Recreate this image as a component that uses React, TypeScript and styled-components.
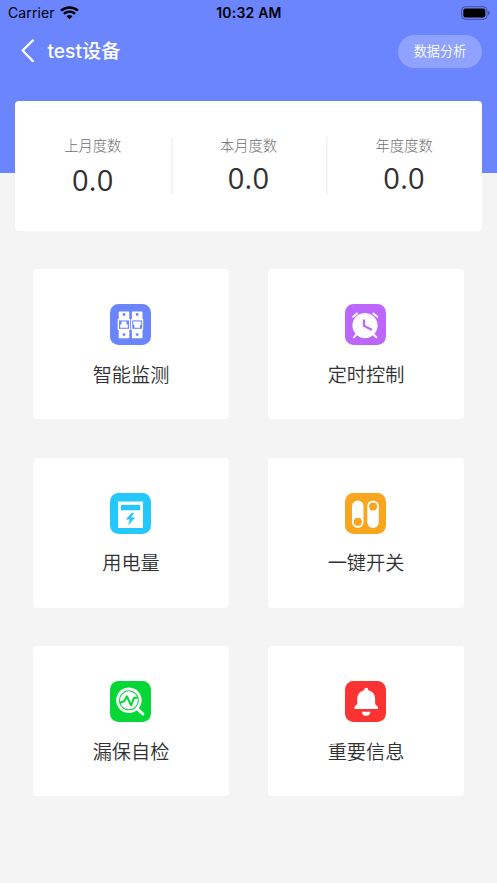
import React from "react";
import styled, { createGlobalStyle } from "styled-components";

const Global = createGlobalStyle`
  * { box-sizing: border-box; }
  body {
    margin: 0;
    background: #f4f4f4;
    font-family: Inter, "Noto Sans CJK SC", sans-serif;
    color: #303133;
  }
`;

const Page = styled.main`
  min-height: 883px;
  overflow: hidden;
  background: linear-gradient(#6b85ff 173px, #f4f4f4 173px);
`;

const StatusBar = styled.div`
  display: grid;
  grid-template-columns: 1fr auto 1fr;
  align-items: center;
  height: 26px;
  padding: 0 7px 0 8px;
  color: #000;
  font-size: 14px;
  line-height: 26px;
`;

const Carrier = styled.div`
  display: flex;
  align-items: center;
  gap: 5px;
  letter-spacing: 0.1px;
`;

const Clock = styled.div`
  font-weight: 600;
  font-size: 14px;
  letter-spacing: 0.2px;
`;

const BatterySlot = styled.div`
  display: flex;
  justify-content: flex-end;
`;

const NavBar = styled.header`
  display: flex;
  align-items: center;
  height: 50px;
  padding: 0 15px 0 20px;
`;

const Title = styled.h1`
  flex: 1;
  margin: 0 0 0 12.5px;
  color: #fff;
  font-size: 19.2px;
  font-weight: 500;
  line-height: 28px;
`;

const PillButton = styled.button`
  width: 84px;
  height: 33px;
  padding: 0;
  border: 0;
  border-radius: 17px;
  background: #8fa2ff;
  color: #fff;
  font: 350 13.2px/32px "Noto Sans CJK SC", sans-serif;
`;

const Summary = styled.section`
  display: grid;
  grid-template-columns: repeat(3, 1fr);
  height: 130px;
  margin: 25px 15px 0;
  padding-top: 36px;
  border-radius: 4px;
  background: #fff;
`;

const Stat = styled.div`
  height: 58px;
  text-align: center;
  & + & {
    background: linear-gradient(#f1f1f1, #f1f1f1) left / 1.5px 100% no-repeat;
  }
`;

const StatLabel = styled.div`
  color: #6f6f6f;
  font-size: 14.3px;
  font-weight: 300;
  line-height: 18px;
`;

const StatValue = styled.div<{ $drop?: number }>`
  margin-top: ${(p) => 5 + (p.$drop ?? 0)}px;
  font-family: "Open Sans", sans-serif;
  font-size: 29px;
  font-weight: 400;
  letter-spacing: 0.3px;
  line-height: 36px;
`;

const Tiles = styled.section`
  display: grid;
  grid-template-columns: repeat(2, 196.5px);
  grid-auto-rows: 150px;
  gap: 38.5px;
  justify-content: center;
  margin-top: 38px;
`;

const Tile = styled.div`
  display: flex;
  flex-direction: column;
  align-items: center;
  padding-top: 35px;
  border-radius: 4px;
  background: #fff;
`;

const TileIcon = styled.svg`
  display: block;
  width: 41px;
  height: 41px;
  margin-right: 1px;
`;

const TileLabel = styled.div`
  margin-top: 15.5px;
  font-size: 19.2px;
  font-weight: 350;
  line-height: 28px;
`;

const Breakers = () => (
  <>
    {[0, 13.2].map((x) => (
      <g key={x} transform={`translate(${x} 0)`}>
        <path d="M9.5 7.5h9q.8 0 .8.8V15h.7v11h-.7v7.4q0 .8-.8.8h-9q-.8 0-.8-.8V26h-1V15h1V8.3q0-.8.8-.8z" fill="#fff" />
        <path d="M9 16.4h10v8.4H9z" fill="#6b85ff" />
        <circle cx="14" cy="10.5" r="1.4" fill="#6b85ff" />
        <circle cx="14" cy="30.6" r="1.4" fill="#6b85ff" />
      </g>
    ))}
    <path d="M11.5 17.4h5v3h1.3v3.3h-7.6v-3.3h1.3zM23.2 17.4h8.1v3.4H30v3h-5.6v-3h-1.2z" fill="#fff" />
  </>
);

const AlarmClock = () => (
  <>
    <circle cx="20" cy="21.6" r="12.6" fill="#fff" />
    <g stroke="#fff" strokeWidth="2" strokeLinecap="round">
      <path d="M8.2 12.8l3.8-3.3M28.4 9.5l3.8 3.3M11.2 30.7l-2.3 2.6M28.9 30.7l2.4 2.6" />
    </g>
    <path d="M19 16.4v5.5l7.2 3.6" fill="none" stroke="#bc66fb" strokeWidth="2.2" strokeLinecap="round" />
  </>
);

const Meter = () => (
  <>
    <path d="M8 8.5h25v26.5H8z" fill="#fff" />
    <path d="M11 11.9h19.2v5.4H11z" fill="#24c8fd" />
    <path d="M22 19.8l-6.3 6.8h4.1l-1.6 6 7-8.2H21l3.2-4.6z" fill="#24c8fd" />
  </>
);

const Toggles = () => (
  <>
    <rect x="7" y="7.5" width="11.5" height="27.5" rx="5.75" fill="#fff" />
    <rect x="22.3" y="7.5" width="11.5" height="27.5" rx="5.75" fill="#fff" />
    <circle cx="12.8" cy="28.8" r="4.1" fill="#f8a61d" />
    <circle cx="28.1" cy="13.6" r="4" fill="#f8a61d" />
  </>
);

const Inspect = () => (
  <>
    <circle cx="18.9" cy="19.3" r="12.7" fill="#fff" />
    <circle cx="18.9" cy="19.3" r="9.5" fill="none" stroke="#07d637" strokeWidth="1.1" />
    <path d="M9.8 21.8l4.4-1.5 2.6-5 4.3 9 2.8-7.2 4.3-.5" fill="none" stroke="#07d637" strokeWidth="2" strokeLinejoin="round" />
    <path d="M27.3 27.8l5.6 5.2" stroke="#fff" strokeWidth="3" strokeLinecap="round" />
  </>
);

const Bell = () => (
  <>
    <path d="M19.2 8.7a2 2 0 0 1 4 0v.6c4.4.9 6.9 4.4 6.9 8.6v4.2c0 2.4 2.9 2.7 2.9 4.8 0 .6-.4 1.1-1.1 1.1H10.5c-.7 0-1.1-.5-1.1-1.1 0-2.1 2.9-2.4 2.9-4.8v-4.2c0-4.2 2.5-7.7 6.9-8.6z" fill="#fff" />
    <path d="M16.9 30.8h8.4a4.2 4 0 0 1-8.4 0z" fill="#fff" />
  </>
);

const stats = [
  { label: "上月度数", value: "0.0", drop: 2 },
  { label: "本月度数", value: "0.0" },
  { label: "年度度数", value: "0.0" },
];

const tiles = [
  { label: "智能监测", color: "#6b85ff", Glyph: Breakers },
  { label: "定时控制", color: "#bc66fb", Glyph: AlarmClock },
  { label: "用电量", color: "#24c8fd", Glyph: Meter },
  { label: "一键开关", color: "#f8a61d", Glyph: Toggles },
  { label: "漏保自检", color: "#07d637", Glyph: Inspect },
  { label: "重要信息", color: "#fc3333", Glyph: Bell },
];

export default function App() {
  return (
    <>
      <Global />
      <Page>
        <StatusBar>
          <Carrier>
            Carrier
            <svg width="19" height="14" viewBox="0 0 18 14" preserveAspectRatio="none">
              <path d="M9 13.2L6.2 10.3a4 4 0 0 1 5.6 0z" />
              <path d="M3.7 7.8a7.6 7.6 0 0 1 10.6 0M1 4.7a11.6 11.6 0 0 1 16 0" fill="none" stroke="#000" strokeWidth="2.4" />
            </svg>
          </Carrier>
          <Clock>10:32 AM</Clock>
          <BatterySlot>
            <svg width="29" height="14" viewBox="0 0 29 14">
              <rect x=".5" y=".7" width="25.5" height="12.6" rx="3.8" fill="none" stroke="#000" strokeOpacity=".4" />
              <rect x="2.3" y="2.5" width="22" height="9" rx="2.2" />
              <path d="M27.2 4.7q1.6.9 1.6 2.3t-1.6 2.3z" fillOpacity=".45" />
            </svg>
          </BatterySlot>
        </StatusBar>
        <NavBar>
          <svg width="15" height="24" viewBox="0 0 15 24">
            <path d="M12.8 1.5L2.6 11.5 12.8 22" fill="none" stroke="#fff" strokeWidth="2.4" strokeLinecap="round" strokeLinejoin="round" />
          </svg>
          <Title>test设备</Title>
          <PillButton>数据分析</PillButton>
        </NavBar>
        <Summary>
          {stats.map((s) => (
            <Stat key={s.label}>
              <StatLabel>{s.label}</StatLabel>
              <StatValue $drop={s.drop}>{s.value}</StatValue>
            </Stat>
          ))}
        </Summary>
        <Tiles>
          {tiles.map(({ label, color, Glyph }) => (
            <Tile key={label}>
              <TileIcon viewBox="0 0 41 41">
                <rect width="41" height="41" rx="8.5" fill={color} />
                <Glyph />
              </TileIcon>
              <TileLabel>{label}</TileLabel>
            </Tile>
          ))}
        </Tiles>
      </Page>
    </>
  );
}
